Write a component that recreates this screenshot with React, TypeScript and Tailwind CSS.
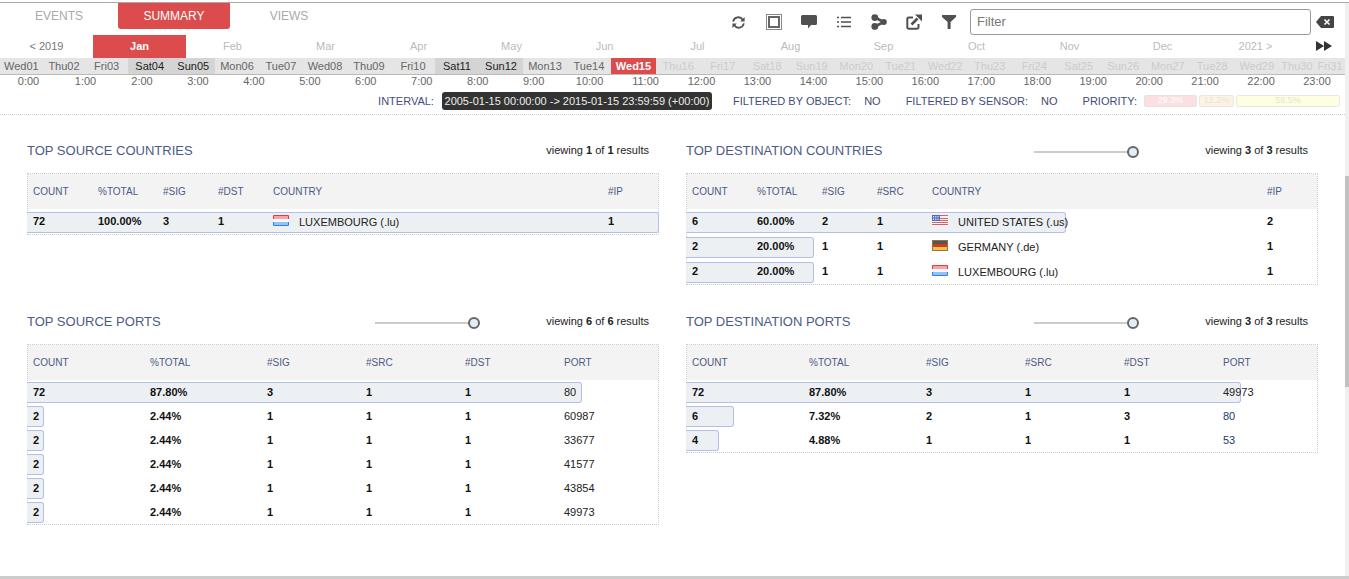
const days = ["Wed01","Thu02","Fri03","Sat04","Sun05","Mon06","Tue07","Wed08","Thu09","Fri10","Sat11","Sun12","Mon13","Tue14","Wed15","Thu16","Fri17","Sat18","Sun19","Mon20","Tue21","Wed22","Thu23","Fri24","Sat25","Sun26","Mon27","Tue28","Wed29","Thu30","Fri31"];
const months = ["Feb","Mar","Apr","May","Jun","Jul","Aug","Sep","Oct","Nov","Dec"];
const hours = Array.from({ length: 24 }, (_, i) => `${i}:00`);

type Flag = "lu" | "us" | "de";

function FlagIcon({ code }: { code: Flag }) {
  if (code === "lu") {
    return (
      <svg width="16" height="11" viewBox="0 0 16 11" className="shrink-0 -mt-[2px]">
        <rect width="16" height="11" fill="#f7f7fb" />
        <rect y="1" width="16" height="3" fill="#f8a5a5" />
        <rect y="7" width="16" height="3" fill="#8fc4fa" />
        <path d="M0.5 4V0.5H15.5V4" fill="none" stroke="#e8383c" />
        <path d="M0.5 7V10.5H15.5V7" fill="none" stroke="#2f7fe8" />
      </svg>
    );
  }
  if (code === "de") {
    return (
      <svg width="16" height="11" viewBox="0 0 16 11" className="shrink-0 -mt-[2px]">
        <rect width="16" height="11" fill="#8a7a45" />
        <rect x="1" y="1" width="14" height="3" fill="#555" />
        <rect x="1" y="4" width="14" height="3" fill="#d8362c" />
        <rect x="1" y="7" width="14" height="3" fill="#f2c53a" />
      </svg>
    );
  }
  return (
    <svg width="16" height="11" viewBox="0 0 16 11" className="shrink-0 -mt-[2px]">
      <rect width="16" height="11" fill="#f4f4f8" />
      <rect width="16" height="1" fill="#d9605f" />
      <rect y="3" width="16" height="1" fill="#d9605f" />
      <rect y="5" width="16" height="1" fill="#d9605f" />
      <rect y="7" width="16" height="1" fill="#d9605f" />
      <rect y="9" width="16" height="1" fill="#d9605f" />
      <rect width="8" height="6" fill="#5468b4" />
      <path d="M1 1.5h6M1 3h6M1 4.5h6" stroke="#eef0fb" strokeWidth="0.9" strokeDasharray="1 0.8" />
    </svg>
  );
}

function Toolbar() {
  return (
    <div className="flex items-center">
      <span className="w-[35px] flex justify-center">
        <svg width="15" height="15" viewBox="0 0 16 16" fill="none" stroke="#505050" strokeWidth="1.9">
          <path d="M12.5 5A5.6 5.6 0 0 0 2.3 7" />
          <path d="M3.5 11A5.6 5.6 0 0 0 13.7 9" />
          <path d="M14.5 2.2V7H9.8z" fill="#505050" stroke="none" />
          <path d="M1.5 13.8V9h4.7z" fill="#505050" stroke="none" />
        </svg>
      </span>
      <span className="w-[35px] flex justify-center">
        <svg width="16" height="16" viewBox="0 0 16 16" fill="none">
          <rect x="0.5" y="0.5" width="15" height="15" stroke="#888" />
          <rect x="3" y="3" width="10" height="10" stroke="#666" strokeWidth="2" />
        </svg>
      </span>
      <span className="w-[35px] flex justify-center">
        <svg width="16" height="14" viewBox="0 0 16 14" fill="#505050">
          <path d="M1.5 0h13A1.5 1.5 0 0 1 16 1.5v7a1.5 1.5 0 0 1-1.5 1.5H10l-3 3.5V10H1.5A1.5 1.5 0 0 1 0 8.5v-7A1.5 1.5 0 0 1 1.5 0z" />
        </svg>
      </span>
      <span className="w-[35px] flex justify-center">
        <svg width="14" height="12" viewBox="0 0 14 12" fill="none" stroke="#505050" strokeWidth="1.4">
          <path d="M0 1.5h2M4 1.5h10M0 6h2M4 6h10M0 10.5h2M4 10.5h10" />
        </svg>
      </span>
      <span className="w-[35px] flex justify-center">
        <svg width="16" height="16" viewBox="0 0 16 16" fill="#505050">
          <circle cx="3.8" cy="3.6" r="3.4" />
          <circle cx="3.8" cy="12.4" r="3.4" />
          <circle cx="12.8" cy="8" r="3" />
          <path d="M4 3.5 12.8 8 4 12.5" fill="none" stroke="#505050" strokeWidth="2.6" />
        </svg>
      </span>
      <span className="w-[35px] flex justify-center">
        <svg width="16" height="16" viewBox="0 0 16 16" fill="none" stroke="#505050">
          <path d="M7 3.5H2.8A1.5 1.5 0 0 0 1.3 5v8.2a1.5 1.5 0 0 0 1.5 1.5H11a1.5 1.5 0 0 0 1.5-1.5V10" strokeWidth="2" />
          <path d="M5.5 10.5 11.5 4.5" strokeWidth="2.6" />
          <path d="M9 0.5h7v7z" fill="#505050" stroke="none" />
        </svg>
      </span>
      <span className="w-[35px] flex justify-center">
        <svg width="14" height="14" viewBox="0 0 14 14" fill="#505050">
          <path d="M0 0h14v2L8.6 7v7H5.6V7L0 2z" />
        </svg>
      </span>
    </div>
  );
}

function dayWidth(i: number) {
  if (i < 3) return "w-[42.67px]";
  if (i < 5) return "w-[43.5px]";
  if (i < 14) return "w-[44px]";
  if (i === 14) return "w-[45px]";
  if (i < 29) return "w-[44.5px]";
  if (i === 29) return "w-[36px]";
  return "flex-1";
}

function Header() {
  return (
    <div>
      {/* Tabs and filter */}
      <div className="h-[32px] flex justify-between text-[12px]">
        <div className="flex items-start">
          <div className="w-[118px] h-[26px] flex items-center justify-center text-[#aaa]">EVENTS</div>
          <div className="w-[112px] h-[26px] flex items-center justify-center bg-[#dc4c4c] text-white rounded-b-[3px]">SUMMARY</div>
          <div className="w-[118px] h-[26px] flex items-center justify-center text-[#aaa]">VIEWS</div>
        </div>
        <div className="flex items-start">
          <div className="h-[38px] flex items-center">
            <Toolbar />
          </div>
          <input
            readOnly
            placeholder="Filter"
            className="ml-[4px] mt-[6px] w-[341px] h-[26px] border border-[#999] rounded-[3px] px-[6px] pb-[2px] text-[13px] placeholder:text-[#777] outline-none"
          />
          <span className="ml-[5px] mt-[13px] mr-[11px]">
            <svg width="18" height="12" viewBox="0 0 18 12" className="block">
              <path d="M5 0h12a1 1 0 0 1 1 1v10a1 1 0 0 1-1 1H5L0 6z" fill="#444" />
              <path d="M8.5 3.5l5 5M13.5 3.5l-5 5" stroke="#fff" strokeWidth="1.6" />
            </svg>
          </span>
        </div>
      </div>

      {/* Months */}
      <div className="h-[23px] flex items-stretch text-[11px]">
        <div className="w-[93px] flex items-center justify-center text-[#777]">&lt; 2019</div>
        <div className="w-[93px] flex items-center justify-center bg-[#dc4c4c] text-white font-bold">Jan</div>
        {months.map((m) => (
          <div key={m} className="w-[93px] flex items-center justify-center text-[#bbb]">{m}</div>
        ))}
        <div className="w-[93px] flex items-center justify-center text-[#bbb]">2021 &gt;</div>
        <div className="flex-1 flex items-center justify-center pb-[1px] pl-[1px]">
          <svg width="16" height="10" viewBox="0 0 16 10" fill="#333">
            <path d="M0 0l8 5-8 5zM8 0l8 5-8 5z" />
          </svg>
        </div>
      </div>

      {/* Days */}
      <div className="h-[17px] flex bg-[#e5e5e5] border-b border-[#bbb] text-[11px]">
        {days.map((d, i) => {
          const weekend = i < 15 && (d.startsWith("Sat") || d.startsWith("Sun"));
          return (
            <div
              key={d}
              className={
                dayWidth(i) +
                " text-center leading-[16px] " +
                (d === "Wed15"
                  ? "bg-[#dc4c4c] text-white font-bold"
                  : i > 14
                    ? "text-[#ccc]"
                    : weekend
                      ? "bg-[#d4d4d4] text-[#222]"
                      : "text-[#666]")
              }
            >
              {d}
            </div>
          );
        })}
      </div>

      {/* Hours */}
      <div className="h-[15px] grid grid-cols-[57px_57px_repeat(22,1fr)] text-[11px] text-[#666] leading-[12px]">
        {hours.map((h) => (
          <div key={h} className="text-center">{h}</div>
        ))}
      </div>

      {/* Interval row */}
      <div className="mt-[2px] h-[18px] flex items-center justify-end pr-[5px] text-[11px] text-[#3f4d80]">
        <span>INTERVAL:</span>
        <span className="ml-[8px] w-[270px] h-[18px] flex items-center justify-center rounded-[3px] bg-[#333] text-[#eee]">
          2005-01-15 00:00:00 -&gt; 2015-01-15 23:59:59 (+00:00)
        </span>
        <span className="ml-[21px]">FILTERED BY OBJECT:</span>
        <span className="ml-[13px] text-[#454b6c]">NO</span>
        <span className="ml-[25px]">FILTERED BY SENSOR:</span>
        <span className="ml-[13px] text-[#454b6c]">NO</span>
        <span className="ml-[25px]">PRIORITY:</span>
        <div className="ml-[7px] flex gap-[2px] text-[9px]">
          <span className="w-[53px] h-[12px] flex items-center justify-center rounded-[2px] border border-[#e4e4e4] bg-[#fbdfe1] text-white">29.3%</span>
          <span className="w-[35px] h-[12px] flex items-center justify-center rounded-[2px] border border-[#e8e8e8] bg-[#fdf3e4] text-[#e9e4d6]">12.2%</span>
          <span className="w-[104px] h-[12px] flex items-center justify-center rounded-[2px] border border-[#e8e8e8] bg-[#fefee2] text-[#e6e6cf]">58.5%</span>
        </div>
      </div>
    </div>
  );
}

function PanelTitle({ title, shown, total, slider }: { title: string; shown: number; total: number; slider?: boolean }) {
  return (
    <div className="h-[20px] mb-[14px] grid grid-cols-[348px_105px_1fr] items-center">
      <div className="text-[13px] text-[#4d5a85] mt-[2px]">{title}</div>
      <div className="flex items-center mt-[4px]">
        {slider && (
          <>
            <div className="flex-1 h-[2px] bg-[#ccc]" />
            <div className="w-[12px] h-[12px] rounded-full border-2 border-[#666] bg-[#e1edf8] -ml-[1px]" />
          </>
        )}
      </div>
      <div className="text-right pr-[10px] text-[11px] text-[#222]">
        viewing <b>{shown}</b> of <b>{total}</b> results
      </div>
    </div>
  );
}

function Bar({ pct, top }: { pct: number; top: string }) {
  return (
    <div
      className={"absolute -left-[1px] h-[21px] bg-[#ecf0f3] border border-[#b3bfe8] border-l-0 rounded-r-[3px] " + top}
      style={{ width: `calc(${pct}% + 2px)` }}
    />
  );
}

type CountryRow = { count: number; pct: number; sig: number; other: number; flag: Flag; country: string; ip: number };

function CountryTable({ other, rows }: { other: string; rows: CountryRow[] }) {
  const cols = "grid grid-cols-[65px_65px_55px_55px_335px_1fr] pl-[5px] items-center";
  return (
    <div className="border border-dotted border-[#ccc]">
      <div className={cols + " h-[35px] bg-[#f3f3f3] text-[10px] text-[#4d5a85]"}>
        <div>COUNT</div>
        <div>%TOTAL</div>
        <div>#SIG</div>
        <div>{other}</div>
        <div>COUNTRY</div>
        <div>#IP</div>
      </div>
      {rows.map((r) => (
        <div key={r.country} className="relative h-[25px]">
          <Bar pct={r.pct} top="top-[3px]" />
          <div className={cols + " relative h-[25px] text-[11px] font-bold text-[#111]"}>
            <div>{r.count}</div>
            <div>{r.pct.toFixed(2)}%</div>
            <div>{r.sig}</div>
            <div>{r.other}</div>
            <div className="flex items-center gap-[10px] font-normal text-[#222]">
              <FlagIcon code={r.flag} />
              <span className="mt-[1px]">{r.country}</span>
            </div>
            <div>{r.ip}</div>
          </div>
        </div>
      ))}
    </div>
  );
}

type PortRow = { count: number; pct: number; sig: number; src: number; dst: number; port: number };

function PortTable({ rows, linkFrom }: { rows: PortRow[]; linkFrom?: number }) {
  const cols = "grid grid-cols-[117px_117px_99px_99px_99px_1fr] pl-[5px] items-center";
  return (
    <div className="border border-dotted border-[#ccc]">
      <div className={cols + " h-[35px] bg-[#f3f3f3] text-[10px] text-[#4d5a85]"}>
        <div>COUNT</div>
        <div>%TOTAL</div>
        <div>#SIG</div>
        <div>#SRC</div>
        <div>#DST</div>
        <div>PORT</div>
      </div>
      {rows.map((r, i) => (
        <div key={r.port} className="relative h-[24px]">
          <Bar pct={r.pct} top="top-[2px]" />
          <div className={cols + " relative h-[24px] text-[11px] font-bold text-[#111]"}>
            <div>{r.count}</div>
            <div>{r.pct.toFixed(2)}%</div>
            <div>{r.sig}</div>
            <div>{r.src}</div>
            <div>{r.dst}</div>
            <div className={"font-normal " + (linkFrom !== undefined && i >= linkFrom ? "text-[#1d3a66]" : "text-[#222]")}>{r.port}</div>
          </div>
        </div>
      ))}
    </div>
  );
}

export default function App() {
  return (
    <div className="h-[579px] overflow-hidden flex flex-col bg-white font-['Liberation_Sans',Arial,sans-serif]">
      <div className="h-[3px] shrink-0 border-b border-[#aaa]" />
      <div className="flex-1 min-h-0 flex">
        <div className="flex-1 min-w-0">
          <Header />
          <div className="mt-[4px] border-t border-dotted border-[#ccc]" />

          <div className="pt-[24px] px-[27px] grid grid-cols-2 gap-x-[27px] gap-y-[25px] items-start">
            {/* Countries */}
            <div>
              <PanelTitle title="TOP SOURCE COUNTRIES" shown={1} total={1} />
              <CountryTable
                other="#DST"
                rows={[{ count: 72, pct: 100, sig: 3, other: 1, flag: "lu", country: "LUXEMBOURG (.lu)", ip: 1 }]}
              />
            </div>
            <div>
              <PanelTitle title="TOP DESTINATION COUNTRIES" shown={3} total={3} slider />
              <CountryTable
                other="#SRC"
                rows={[
                  { count: 6, pct: 60, sig: 2, other: 1, flag: "us", country: "UNITED STATES (.us)", ip: 2 },
                  { count: 2, pct: 20, sig: 1, other: 1, flag: "de", country: "GERMANY (.de)", ip: 1 },
                  { count: 2, pct: 20, sig: 1, other: 1, flag: "lu", country: "LUXEMBOURG (.lu)", ip: 1 },
                ]}
              />
            </div>

            {/* Ports */}
            <div>
              <PanelTitle title="TOP SOURCE PORTS" shown={6} total={6} slider />
              <PortTable
                rows={[
                  { count: 72, pct: 87.8, sig: 3, src: 1, dst: 1, port: 80 },
                  { count: 2, pct: 2.44, sig: 1, src: 1, dst: 1, port: 60987 },
                  { count: 2, pct: 2.44, sig: 1, src: 1, dst: 1, port: 33677 },
                  { count: 2, pct: 2.44, sig: 1, src: 1, dst: 1, port: 41577 },
                  { count: 2, pct: 2.44, sig: 1, src: 1, dst: 1, port: 43854 },
                  { count: 2, pct: 2.44, sig: 1, src: 1, dst: 1, port: 49973 },
                ]}
              />
            </div>
            <div>
              <PanelTitle title="TOP DESTINATION PORTS" shown={3} total={3} slider />
              <PortTable
                linkFrom={1}
                rows={[
                  { count: 72, pct: 87.8, sig: 3, src: 1, dst: 1, port: 49973 },
                  { count: 6, pct: 7.32, sig: 2, src: 1, dst: 3, port: 80 },
                  { count: 4, pct: 4.88, sig: 1, src: 1, dst: 1, port: 53 },
                ]}
              />
            </div>
          </div>
        </div>

        {/* Scrollbar */}
        <div className="w-[4px] shrink-0 bg-[#f0f0f0] flex flex-col">
          <div className="h-[173px] shrink-0" />
          <div className="h-[211px] shrink-0 bg-[#c1c1c1]" />
        </div>
      </div>
      <div className="h-[3px] shrink-0 bg-[#ccc]" />
    </div>
  );
}
